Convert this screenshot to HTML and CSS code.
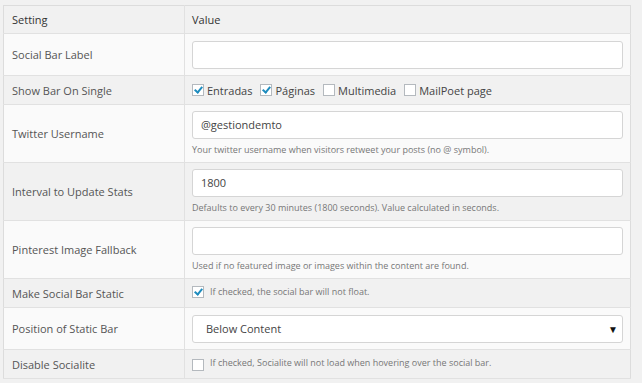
FILE: index.html
```html
<!DOCTYPE html>
<html lang="en">
<head>
  <meta charset="UTF-8">
  <title>Socialite Settings</title>
  <link rel="stylesheet" href="styles.css">
</head>
<body>
  <!-- settings table -->
  <table class="settings">
    <tr class="head">
      <th class="col-setting">Setting</th>
      <th>Value</th>
    </tr>
    <tr>
      <td class="label">Social Bar Label</td>
      <td><div class="field"></div></td>
    </tr>
    <tr>
      <td class="label">Show Bar On Single</td>
      <td>
        <div class="checks">
          <span class="check"><span class="box on"></span>Entradas</span>
          <span class="check"><span class="box on"></span>Páginas</span>
          <span class="check"><span class="box"></span>Multimedia</span>
          <span class="check"><span class="box"></span>MailPoet page</span>
        </div>
      </td>
    </tr>
    <tr class="tall">
      <td class="label">Twitter Username</td>
      <td>
        <div class="field">@gestiondemto</div>
        <div class="desc">Your twitter username when visitors retweet your posts (no @ symbol).</div>
      </td>
    </tr>
    <tr class="tall">
      <td class="label">Interval to Update Stats</td>
      <td>
        <div class="field">1800</div>
        <div class="desc">Defaults to every 30 minutes (1800 seconds). Value calculated in seconds.</div>
      </td>
    </tr>
    <tr class="tall">
      <td class="label">Pinterest Image Fallback</td>
      <td>
        <div class="field"></div>
        <div class="desc">Used if no featured image or images within the content are found.</div>
      </td>
    </tr>
    <tr>
      <td class="label">Make Social Bar Static</td>
      <td><span class="check small"><span class="box on"></span>If checked, the social bar will not float.</span></td>
    </tr>
    <tr>
      <td class="label">Position of Static Bar</td>
      <td>
        <div class="field select">Below Content<span class="arrow">▼</span></div>
      </td>
    </tr>
    <tr>
      <td class="label">Disable Socialite</td>
      <td><span class="check small low"><span class="box"></span>If checked, Socialite will not load when hovering over the social bar.</span></td>
    </tr>
  </table>
</body>
</html>
```

FILE: styles.css
```css
body { margin:0; background:#f1f1f1; font-family:"Open Sans", Arial, sans-serif; color:#555; }
.settings { margin:5px 0 0 3px; width:628px; border-collapse:collapse; border:1px solid #dcdcdc; font-size:11px; }
.settings th, .settings td { border-bottom:1px solid #e1e1e1; text-align:left; vertical-align:middle; padding:0 7px; }
.settings th { height:27px; font-weight:normal; color:#333; background:#f1f1f1; }
.settings .col-setting { width:168px; padding-left:8px; }
.settings td { height:28px; }
.settings td.label { padding-left:8px; border-right:1px solid #e1e1e1; }
.settings th.col-setting { border-right:1px solid #e1e1e1; }
.settings tr:nth-child(even) td { background:#fafafa; }
.settings tr:nth-child(odd) td { background:#f1f1f1; }
.settings tr.tall td { height:57px; }
.settings tr:nth-child(2) td { height:41px; }
.settings tr:nth-child(8) td { height:41px; }

.field { box-sizing:border-box; height:28px; width:431px; border:1px solid #d5d5d5; border-radius:3px; background:#fff; padding:0 8px; line-height:26px; color:#444; font-size:11px; }
.select { position:relative; padding-left:13px; }
.select .arrow { position:absolute; right:4px; top:0; font-size:10px; color:#111; }
.desc { font-size:9px; color:#777; margin-top:4px; }

.checks { display:flex; gap:8px; }
.check { display:inline-flex; align-items:center; gap:3px; color:#444; }
.check.small { font-size:9px; color:#777; gap:6px; }
.check.low .box { margin-top:5px; }
.box { box-sizing:border-box; width:12px; height:12px; border:1px solid #b4b9be; background:#fff; display:inline-block; position:relative; }
.box.on::after { content:""; position:absolute; left:3px; top:0px; width:3px; height:6px; border:solid #1e8cbe; border-width:0 2px 2px 0; transform:rotate(40deg); }
```
